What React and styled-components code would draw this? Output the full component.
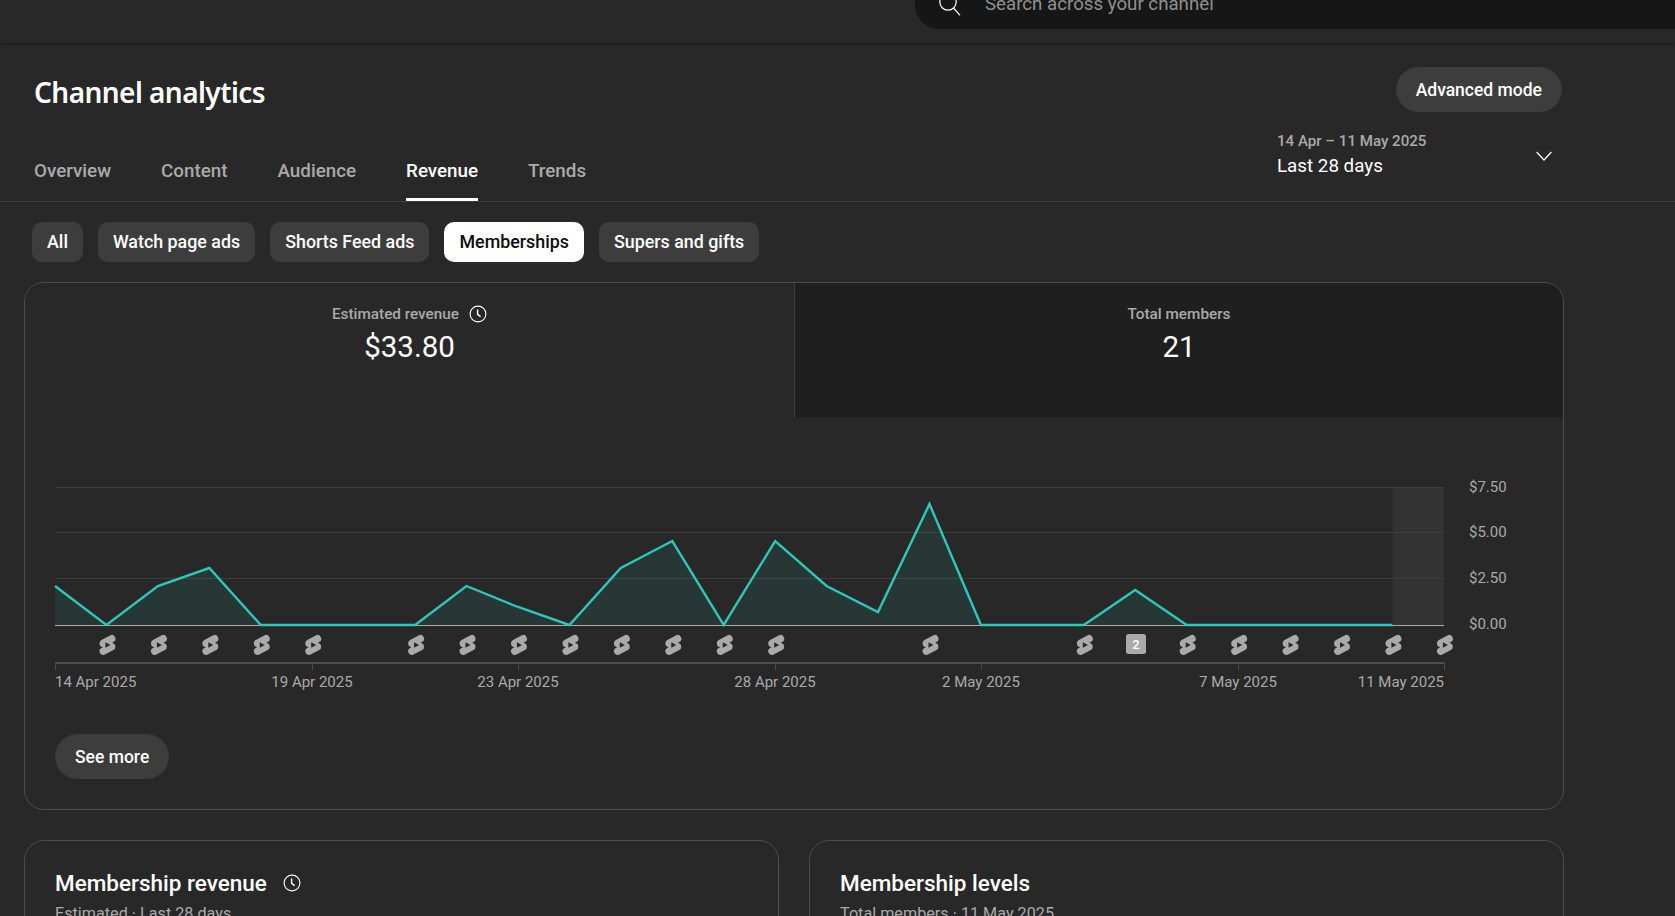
import styled, { createGlobalStyle } from "styled-components";

const GlobalStyle = createGlobalStyle`
  html, body {
    margin: 0;
    padding: 0;
    height: 916px;
    overflow: hidden;
    background: #282828;
    color: #fff;
    font-family: Roboto, "Liberation Sans", sans-serif;
  }
  * {
    box-sizing: border-box;
  }
`;

const Page = styled.div`
  width: 1675px;
  height: 916px;
  overflow: hidden;
  background: #282828;
`;

const TopBar = styled.header`
  height: 43px;
  display: flex;
  justify-content: flex-end;
  align-items: flex-end;
  padding-bottom: 14px;
  background: #282828;
  box-shadow: 0 1px 3px rgba(0, 0, 0, 0.35);
  position: relative;
`;

const SearchBox = styled.div`
  width: 760px;
  height: 50px;
  flex: none;
  display: flex;
  align-items: center;
  gap: 23px;
  padding-left: 23px;
  background: #161616;
  border-radius: 24px 0 0 24px;
  color: #909090;
  font-size: 18.7px;
`;

const TitleRow = styled.div`
  width: 1562px;
  height: 69px;
  padding: 24px 0 0 34px;
  display: flex;
  justify-content: space-between;
  align-items: flex-start;
`;

const PageTitle = styled.h1`
  margin: 5px 0 0;
  font-family: "Noto Sans", sans-serif;
  font-size: 28px;
  line-height: 40px;
  font-weight: 600;
  letter-spacing: -0.55px;
`;

const PillButton = styled.button`
  height: 45px;
  padding: 0 20px;
  border: 0;
  border-radius: 23px;
  background: #3d3d3d;
  color: #fff;
  font-family: Roboto, sans-serif;
  font-size: 17.5px;
  font-weight: 500;
`;

const TabsRow = styled.div`
  height: 90px;
  padding: 0 123px 0 34px;
  display: flex;
  justify-content: space-between;
  border-bottom: 1px solid #3e3e3e;
`;

const Tabs = styled.nav`
  display: flex;
  gap: 50px;
  align-items: flex-end;
`;

const Tab = styled.div`
  height: 58px;
  padding-top: 16px;
  font-size: 18.8px;
  line-height: 24px;
  font-weight: 500;
  color: ${(p) => (p.$active ? "#fff" : "#aaa")};
  border-bottom: 3px solid ${(p) => (p.$active ? "#fff" : "transparent")};
`;

const DateRange = styled.div`
  width: 275px;
  padding-top: 19px;
  display: flex;
  justify-content: space-between;
`;

const DateText = styled.div`
  display: flex;
  flex-direction: column;
`;

const DateSpan = styled.span`
  font-size: 15.1px;
  line-height: 20px;
  font-weight: 500;
  color: #aaa;
`;

const DateLabel = styled.span`
  margin-top: 3px;
  font-size: 18.8px;
  line-height: 24px;
  color: #fff;
`;

const Chevron = styled.svg`
  margin: 20px 0 0;
  width: 16px;
  height: 10px;
`;

const Chips = styled.div`
  display: flex;
  gap: 15px;
  padding: 20px 0 0 32px;
`;

const Chip = styled.div`
  height: 40px;
  padding: 0 15px 1px;
  display: flex;
  align-items: center;
  border-radius: 10px;
  font-size: 17.85px;
  font-weight: 500;
  background: ${(p) => (p.$active ? "#fff" : "#3d3d3d")};
  color: ${(p) => (p.$active ? "#0d0d0d" : "#fff")};
`;

const Card = styled.section`
  width: 1540px;
  margin: 20px 0 0 24px;
  height: 528px;
  border: 1px solid #4d4d4d;
  border-radius: 20px;
  overflow: hidden;
`;

const Metrics = styled.div`
  display: grid;
  grid-template-columns: 769px 1fr;
  height: 135px;
`;

const Metric = styled.div`
  padding-top: 21px;
  display: flex;
  flex-direction: column;
  align-items: center;
  background: ${(p) => (p.$selected ? "#282828" : "#1f1f1f")};
  border-left: ${(p) => (p.$selected ? "0" : "1px solid #3e3e3e")};
`;

const MetricLabel = styled.div`
  display: flex;
  align-items: center;
  gap: 10px;
  height: 20px;
  font-size: 15.3px;
  font-weight: 500;
  color: #aaa;
`;

const MetricValue = styled.div`
  margin-top: 1px;
  font-size: 29.5px;
  line-height: 44px;
  color: #fff;
`;

const ChartBlock = styled.div`
  padding: 52px 0 0 30px;
`;

const ChartSvg = styled.svg`
  display: block;
  overflow: visible;
  font-family: Roboto, sans-serif;
  font-size: 15px;
  fill: #aaa;
`;

const SeeMore = styled(PillButton)`
  display: block;
  margin: 34px 0 0 30px;
`;

const BottomRow = styled.div`
  width: 1540px;
  margin: 30px 0 0 24px;
  display: grid;
  grid-template-columns: 755px 755px;
  gap: 30px;
`;

const SmallCard = styled.section`
  height: 200px;
  padding: 26px 29px 0 30px;
  border: 1px solid #4d4d4d;
  border-radius: 20px;
`;

const CardTitle = styled.h2`
  margin: 0;
  display: flex;
  align-items: center;
  gap: 16px;
  font-size: 22.5px;
  line-height: 32px;
  font-weight: 500;
`;

const CardSub = styled.div`
  margin-top: 5px;
  font-size: 16.2px;
  line-height: 20px;
  color: #aaa;
`;

const ClockIcon = ({ size = 18 }) => (
  <svg width={size} height={size} viewBox="0 0 18 18" fill="none" stroke="#fff">
    <circle cx="9" cy="9" r="7.9" strokeWidth="1.1" />
    <path d="M8.6 4.6 V9.4 L11.6 11.6" strokeWidth="1.4" />
  </svg>
);

const SearchIcon = () => (
  <svg width="24" height="24" viewBox="0 0 24 24" fill="none" stroke="#fff" strokeWidth="1.2">
    <circle cx="10" cy="10" r="8.2" />
    <path d="M15.6 16 L22 23.4" />
  </svg>
);

// chart numbers, in px inside the svg (0,0 is at page 55,470)
const STEP = 51.44;
const TOP = 17;
const BASE = 155;
const ys = [586, 625, 586, 568, 625, 625, 625, 625, 586, 607, 625, 568, 541, 625, 541, 586, 612, 504, 625, 625, 625, 590, 625, 625, 625, 625, 625].map((y) => y - 470);
const linePts = ys.map((y, i) => `${(i * STEP).toFixed(1)},${y}`).join(" ");
const areaPts = `0,${BASE} ${linePts} ${(26 * STEP).toFixed(1)},${BASE}`;
const grid = [17, 62, 108];
const yLabels = [
  ["$7.50", 17],
  ["$5.00", 62],
  ["$2.50", 108],
  ["$0.00", 154],
];
const shorts = [1, 2, 3, 4, 5, 7, 8, 9, 10, 11, 12, 13, 14, 17, 20, 22, 23, 24, 25, 26, 27];
const xLabels = [
  ["14 Apr 2025", 0, "start"],
  ["19 Apr 2025", 257, "middle"],
  ["23 Apr 2025", 463, "middle"],
  ["28 Apr 2025", 720, "middle"],
  ["2 May 2025", 926, "middle"],
  ["7 May 2025", 1183, "middle"],
  ["11 May 2025", 1389, "end"],
];
const ticks = [0, 257, 463, 720, 926, 1183, 1389];

const ShortsMark = ({ x }) => (
  <g transform={`translate(${x - 12} 163)`}>
    <path
      fill="#aaa"
      d="M17.77 10.32l-1.2-.5L18 9.06a3.74 3.74 0 0 0-3.5-6.62L6 6.94a3.74 3.74 0 0 0 .23 6.74l1.2.49L6 14.93a3.75 3.75 0 0 0 3.5 6.63l8.5-4.5a3.74 3.74 0 0 0-.23-6.74Z"
    />
    <polygon fill="#282828" points="10 14.65 15 12 10 9.35" />
  </g>
);

const Chart = () => (
  <ChartSvg width="1470" height="230" viewBox="0 0 1470 230">
    <rect x={26 * STEP} y={TOP} width={STEP} height={BASE - TOP} fill="#333" />
    {grid.map((y) => (
      <line key={y} x1="0" x2="1389" y1={y + 0.5} y2={y + 0.5} stroke="#3e3e3e" />
    ))}
    <polygon points={areaPts} fill="#2bc4b6" fillOpacity="0.1" />
    <line x1="0" x2="1389" y1={BASE + 0.5} y2={BASE + 0.5} stroke="#aaa" />
    <polyline points={linePts} fill="none" stroke="#2ec7b9" strokeWidth="2.4" />
    {shorts.map((i) => (
      <ShortsMark key={i} x={i * STEP + 1} />
    ))}
    <rect x="1071" y="164" width="20" height="20" rx="2.5" fill="#aaa" />
    <text x="1081" y="179" textAnchor="middle" fontSize="13" fontWeight="500" fill="#fff">
      2
    </text>
    <line x1="0" x2="1389" y1="193" y2="193" stroke="#5a5a5a" strokeWidth="1.5" />
    {ticks.map((x) => (
      <line key={x} x1={x + 0.5} x2={x + 0.5} y1="193" y2="200" stroke="#4d4d4d" />
    ))}
    {xLabels.map(([label, x, anchor]) => (
      <text key={label} x={x} y="217" textAnchor={anchor}>
        {label}
      </text>
    ))}
    {yLabels.map(([label, y]) => (
      <text key={label} x="1414" y={y + 5}>
        {label}
      </text>
    ))}
  </ChartSvg>
);

const App = () => (
  <Page>
    <GlobalStyle />
    <TopBar>
      <SearchBox>
        <SearchIcon />
        Search across your channel
      </SearchBox>
    </TopBar>
    <TitleRow>
      <PageTitle>Channel analytics</PageTitle>
      <PillButton>Advanced mode</PillButton>
    </TitleRow>
    <TabsRow>
      <Tabs>
        <Tab>Overview</Tab>
        <Tab>Content</Tab>
        <Tab>Audience</Tab>
        <Tab $active>Revenue</Tab>
        <Tab>Trends</Tab>
      </Tabs>
      <DateRange>
        <DateText>
          <DateSpan>14 Apr – 11 May 2025</DateSpan>
          <DateLabel>Last 28 days</DateLabel>
        </DateText>
        <Chevron viewBox="0 0 16 10" fill="none" stroke="#fff" strokeWidth="1.2">
          <path d="M0.6 1 L8 9 L15.4 1" />
        </Chevron>
      </DateRange>
    </TabsRow>
    <Chips>
      <Chip>All</Chip>
      <Chip>Watch page ads</Chip>
      <Chip>Shorts Feed ads</Chip>
      <Chip $active>Memberships</Chip>
      <Chip>Supers and gifts</Chip>
    </Chips>
    <Card>
      <Metrics>
        <Metric $selected>
          <MetricLabel>
            Estimated revenue
            <ClockIcon />
          </MetricLabel>
          <MetricValue>$33.80</MetricValue>
        </Metric>
        <Metric>
          <MetricLabel>Total members</MetricLabel>
          <MetricValue>21</MetricValue>
        </Metric>
      </Metrics>
      <ChartBlock>
        <Chart />
      </ChartBlock>
      <SeeMore>See more</SeeMore>
    </Card>
    <BottomRow>
      <SmallCard>
        <CardTitle>
          Membership revenue
          <ClockIcon />
        </CardTitle>
        <CardSub>Estimated · Last 28 days</CardSub>
      </SmallCard>
      <SmallCard>
        <CardTitle>Membership levels</CardTitle>
        <CardSub>Total members · 11 May 2025</CardSub>
      </SmallCard>
    </BottomRow>
  </Page>
);

export default App;
